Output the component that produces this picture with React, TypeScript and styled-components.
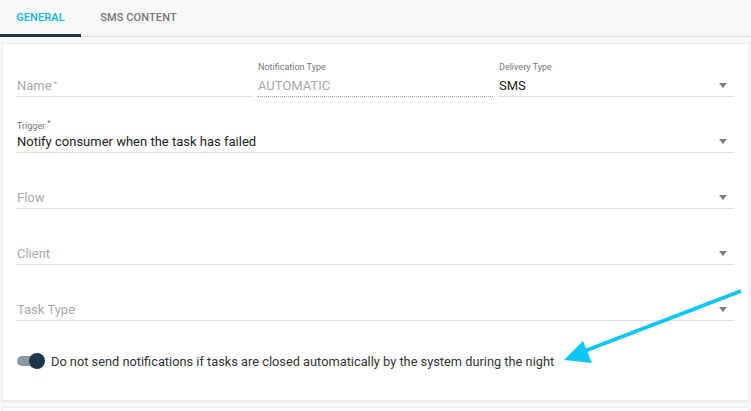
import React from "react";
import styled, { createGlobalStyle } from "styled-components";

const GlobalStyle = createGlobalStyle`
  body {
    margin: 0;
    background: #f8f8f8;
    font-family: Roboto, "Liberation Sans", Arial, sans-serif;
  }
`;

const Page = styled.div`
  position: relative;
  width: 751px;
  height: 411px;
  overflow: hidden;
`;

const Tabs = styled.div`
  display: flex;
  height: 36px;
  border-bottom: 1px solid #e2e2e2;
`;

const Tab = styled.div<{ $active?: boolean }>`
  display: flex;
  align-items: center;
  justify-content: center;
  width: ${(p) => (p.$active ? "81px" : "115px")};
  box-sizing: border-box;
  font-size: 11px;
  font-weight: 500;
  letter-spacing: 0.1px;
  color: ${(p) => (p.$active ? "#00bcd4" : "#777")};
  border-bottom: 3px solid ${(p) => (p.$active ? "#1f3649" : "transparent")};
  margin-bottom: -1px;
`;

const Card = styled.div`
  margin: 6px 2px 0;
  background: #fff;
  border: 1px solid #ececec;
  box-shadow: 0 1px 2px rgba(0, 0, 0, 0.06);
  padding: 16px 14px 27px 13px;
  display: flex;
  flex-direction: column;
  gap: 19px;
`;

const NextCard = styled(Card)`
  height: 20px;
  padding: 0;
  margin-top: 6px;
`;

const Row = styled.div`
  display: grid;
  grid-template-columns: repeat(3, 1fr);
  column-gap: 5px;
`;

const Field = styled.div`
  display: flex;
  flex-direction: column;
`;

const Label = styled.div`
  height: 12px;
  line-height: 12px;
  padding-top: 1px;
  margin-bottom: -1px;
  font-size: 9px;
  color: #777;
  padding-left: 1px;
`;

const Input = styled.div<{ $dotted?: boolean }>`
  position: relative;
  display: flex;
  align-items: center;
  box-sizing: border-box;
  height: 25px;
  padding: 2px 0 0 1px;
  font-size: 13px;
  color: #222;
  border-bottom: 1px ${(p) => (p.$dotted ? "dotted #a8a8a8" : "solid #e0e0e0")};
`;

const Placeholder = styled.span`
  color: #a9a9a9;
`;

const Star = styled.sup`
  font-size: 8px;
  margin-left: 2px;
  vertical-align: 4px;
`;

const Caret = styled.span`
  position: absolute;
  right: 7px;
  top: 11px;
  width: 0;
  height: 0;
  border-left: 4px solid transparent;
  border-right: 4px solid transparent;
  border-top: 5px solid #7a7a7a;
`;

const ToggleRow = styled.div`
  display: flex;
  align-items: center;
  height: 24px;
  margin-top: 9px;
  padding-left: 1px;
  gap: 6px;
  font-size: 12.8px;
  color: #333;
`;

const Switch = styled.div`
  position: relative;
  width: 28px;
  height: 16px;
`;

const Track = styled.div`
  position: absolute;
  left: 0;
  top: 3px;
  width: 24px;
  height: 10px;
  border-radius: 5px;
  background: #8d979f;
`;

const Thumb = styled.div`
  position: absolute;
  right: 0;
  top: 0;
  width: 16px;
  height: 16px;
  border-radius: 50%;
  background: #1f3649;
`;

const Pointer = styled.svg`
  position: absolute;
  left: 0;
  top: 0;
  pointer-events: none;
`;

type SelectProps = { label?: string; placeholder?: string; value?: string };

const Select: React.FC<SelectProps> = ({ label, placeholder, value }) => (
  <Field>
    <Label>{label}</Label>
    <Input>
      {value ? value : <Placeholder>{placeholder}</Placeholder>}
      <Caret />
    </Input>
  </Field>
);

const App: React.FC = () => {
  return (
    <Page>
      <GlobalStyle />
      <Tabs>
        <Tab $active>GENERAL</Tab>
        <Tab>SMS CONTENT</Tab>
      </Tabs>
      <Card>
        <Row>
          <Field>
            <Label />
            <Input>
              <Placeholder>
                Name<Star>*</Star>
              </Placeholder>
            </Input>
          </Field>
          <Field>
            <Label>Notification Type</Label>
            <Input $dotted>
              <Placeholder>AUTOMATIC</Placeholder>
            </Input>
          </Field>
          <Select label="Delivery Type" value="SMS" />
        </Row>
        <Field>
          <Label>
            Trigger<Star>*</Star>
          </Label>
          <Input>
            Notify consumer when the task has failed
            <Caret />
          </Input>
        </Field>
        <Select placeholder="Flow" />
        <Select placeholder="Client" />
        <Select placeholder="Task Type" />
        <ToggleRow>
          <Switch>
            <Track />
            <Thumb />
          </Switch>
          Do not send notifications if tasks are closed automatically by the
          system during the night
        </ToggleRow>
      </Card>
      <NextCard />
      <Pointer width="751" height="411" viewBox="0 0 751 411">
        <line
          x1="741"
          y1="291"
          x2="582"
          y2="352"
          stroke="#0cc6f6"
          strokeWidth="4"
        />
        <polygon points="564,360 583,341 592,363" fill="#0cc6f6" />
      </Pointer>
    </Page>
  );
};

export default App;
